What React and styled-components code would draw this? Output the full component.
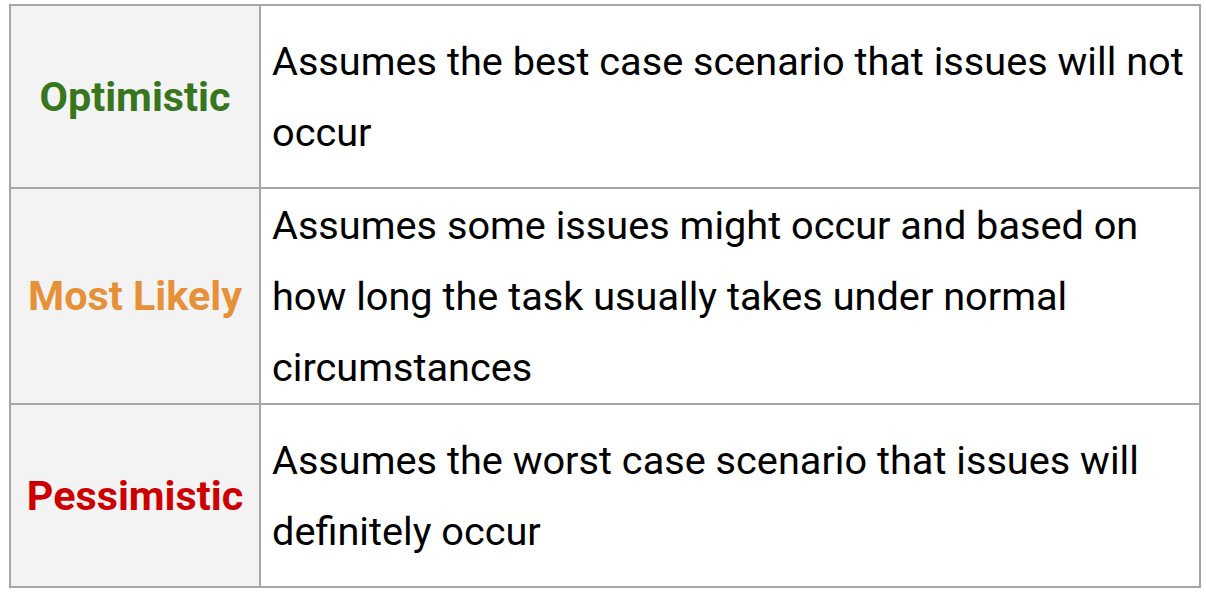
import React from 'react';
import styled, { createGlobalStyle } from 'styled-components';

const GlobalStyle = createGlobalStyle`
	html, body {
		margin: 0;
		padding: 0;
		background: #ffffff;
	}
	body {
		font-family: Roboto, "Liberation Sans", sans-serif;
	}
`;

const Page = styled.div`
	padding: 4px 5px 0 9px;
`;

const Table = styled.table`
	width: 1192px;
	border-collapse: collapse;
	table-layout: fixed;
	border: 2px solid #a6a6a6;
`;

const Row = styled.tr`
	height: ${(p) => p.height}px;
`;

const Label = styled.td`
	width: 248px;
	background: #f3f3f3;
	border: 2px solid #a6a6a6;
	text-align: center;
	vertical-align: middle;
	padding: 0;
	font-size: 41.3px;
	font-weight: 700;
	color: ${(p) => p.color};
	white-space: nowrap;
`;

const Text = styled.td`
	border: 2px solid #a6a6a6;
	vertical-align: middle;
	padding: 0 10px 0 11px;
	font-size: 39.7px;
	line-height: 71px;
	color: #000000;
`;

const rows = [
	{
		label: 'Optimistic',
		color: '#38761d',
		height: 183,
		text: 'Assumes the best case scenario that issues will not occur',
	},
	{
		label: 'Most Likely',
		color: '#e69138',
		height: 216,
		text: 'Assumes some issues might occur and based on how long the task usually takes under normal circumstances',
	},
	{
		label: 'Pessimistic',
		color: '#cc0000',
		height: 183,
		text: 'Assumes the worst case scenario that issues will definitely occur',
	},
];

export default function App() {
	return (
		<Page>
			<GlobalStyle />
			<Table>
				<tbody>
					{rows.map((r) => (
						<Row key={r.label} height={r.height}>
							<Label color={r.color}>{r.label}</Label>
							<Text>{r.text}</Text>
						</Row>
					))}
				</tbody>
			</Table>
		</Page>
	);
}
